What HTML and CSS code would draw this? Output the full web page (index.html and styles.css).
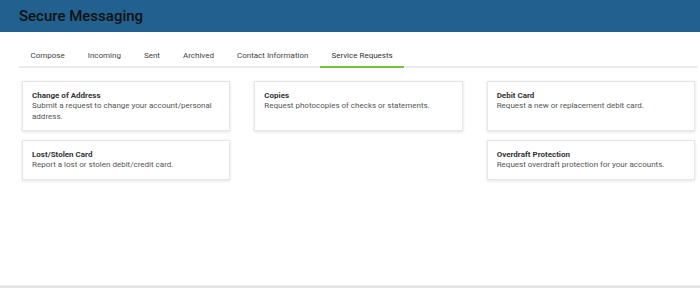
FILE: index.html
```html
<!DOCTYPE html>
<html lang="en">
  <head>
    <meta charset="utf-8" />
    <meta name="viewport" content="width=device-width, initial-scale=1" />
    <title>Secure Messaging</title>
    <link rel="stylesheet" href="styles.css">
  </head>
  <body>
    <header class="topbar">
      <h1>Secure Messaging</h1>
    </header>
    <main class="page">
      <nav class="tabs">
        <a href="#" class="tab">Compose</a>
        <a href="#" class="tab">Incoming</a>
        <a href="#" class="tab">Sent</a>
        <a href="#" class="tab">Archived</a>
        <a href="#" class="tab">Contact Information</a>
        <a href="#" class="tab active">Service Requests</a>
      </nav>

      <!-- service request cards -->
      <section class="cards">
        <div class="card">
          <h4>Change of Address</h4>
          <p>Submit a request to change your account/personal address.</p>
        </div>
        <div class="card">
          <h4>Copies</h4>
          <p>Request photocopies of checks or statements.</p>
        </div>
        <div class="card">
          <h4>Debit Card</h4>
          <p>Request a new or replacement debit card.</p>
        </div>
        <div class="card">
          <h4>Lost/Stolen Card</h4>
          <p>Report a lost or stolen debit/credit card.</p>
        </div>
        <div class="spacer"></div>
        <div class="card">
          <h4>Overdraft Protection</h4>
          <p>Request overdraft protection for your accounts.</p>
        </div>
      </section>
    </main>
    <footer class="bottom"></footer>
  </body>
</html>
```

FILE: styles.css
```css
* {
  box-sizing: border-box;
}
body {
  margin: 0;
  font-family: Roboto, "Liberation Sans", sans-serif;
  background: #fff;
  color: #333;
  height: 288px;
  display: flex;
  flex-direction: column;
}
.topbar {
  background: #22608f;
  height: 32px;
  display: flex;
  align-items: center;
  padding-left: 19px;
}
.topbar h1 {
  margin: 0;
  font-size: 15px;
  font-weight: 500;
  color: #111;
}
.page {
  flex: 1;
  padding: 13px 3px 0 19px;
}

/* tabs */
.tabs {
  display: flex;
  border-bottom: 2px solid #ebebeb;
}
.tab {
  padding: 6px 11.5px 5px;
  font-size: 8px;
  line-height: 10px;
  color: #444;
  text-decoration: none;
  border-bottom: 2px solid transparent;
  margin-bottom: -2px;
}
.tab.active {
  border-bottom-color: #78c13b;
  color: #333;
}

/* cards */
.cards {
  display: grid;
  grid-template-columns: repeat(3, 1fr);
  gap: 9px 24px;
  margin: 13px 2px 0 3px;
}
.card {
  background: #fff;
  border: 1px solid #e6e6e6;
  box-shadow: 0 1px 3px rgba(0, 0, 0, 0.12);
  padding: 8.5px 9px 8px;
}
.card h4 {
  margin: 0;
  font-size: 8px;
  line-height: 10.5px;
  font-weight: 700;
  color: #333;
}
.card p {
  margin: 0;
  font-size: 8px;
  line-height: 10.5px;
  color: #555;
}
.bottom {
  height: 3px;
  border-top: 1px solid #ececec;
  background: #e3e3e3;
}
```
